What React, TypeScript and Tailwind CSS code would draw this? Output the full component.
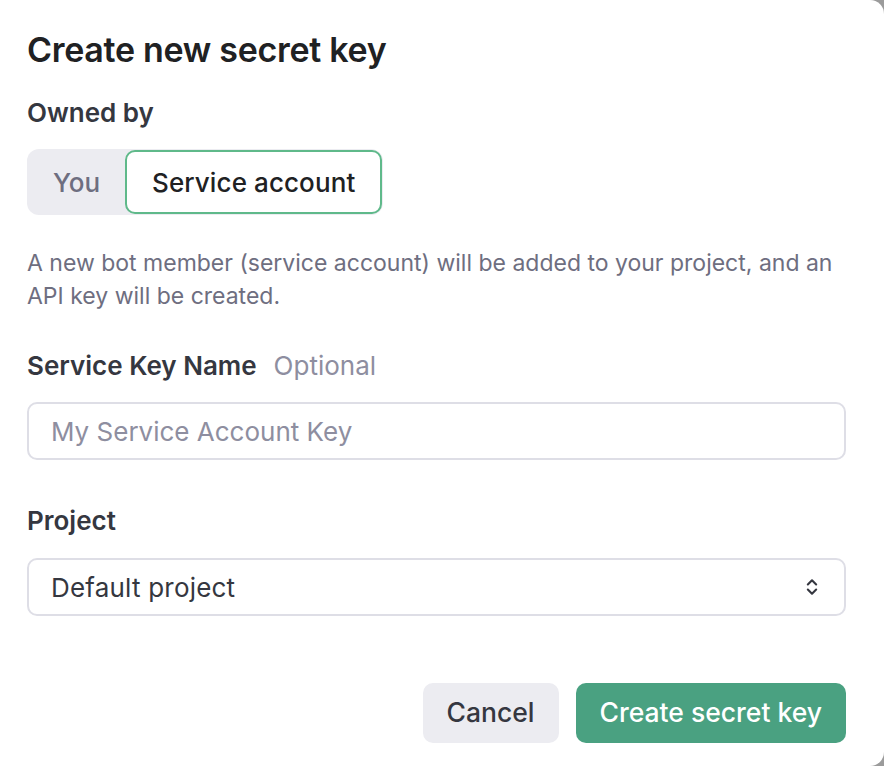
import { ChevronsUpDown } from "lucide-react";

export default function App() {
  return (
    <div className="w-[884px] h-[766px] bg-[#9b9b9b] font-['Inter',sans-serif]">
      <div className="w-full h-full bg-white rounded-r-[14px] pl-[27px] pr-[38px] pt-[30px]">
        <h1 className="text-[34px] leading-[40px] font-semibold text-[#202123] tracking-[-0.3px]">
          Create new secret key
        </h1>

        <h2 className="mt-[27px] text-[26px] leading-[32px] font-semibold text-[#353740]">Owned by</h2>

        <div className="mt-[20px] inline-flex h-[66px] rounded-[12px] bg-[#ececf1] p-px">
          <button className="w-[97px] text-[26px] font-medium text-[#6e6e80]">You</button>
          <button className="px-[25px] rounded-[10px] border-2 border-[#5fb98a] bg-white text-[26px] font-medium text-[#202123] tracking-[0.1px]">
            Service account
          </button>
        </div>

        <p className="mt-[32px] text-[23px] leading-[33px] text-[#6e6e80]">
          A new bot member (service account) will be added to your project, and an API key will be created.
        </p>

        <div className="mt-[37px] flex items-baseline gap-[17px]">
          <span className="text-[26px] leading-[32px] font-semibold text-[#353740]">Service Key Name</span>
          <span className="text-[26px] leading-[32px] text-[#8e8ea0]">Optional</span>
        </div>

        <input
          placeholder="My Service Account Key"
          className="mt-[20px] w-full h-[58px] rounded-[10px] border-2 border-[#dedee6] px-[22px] text-[26px] text-[#353740] placeholder:text-[#8e8ea0] outline-none"
        />

        <h2 className="mt-[45px] text-[26px] leading-[32px] font-semibold text-[#353740]">Project</h2>

        <div className="mt-[21px] w-full h-[58px] rounded-[10px] border-2 border-[#dedee6] px-[22px] flex items-center justify-between">
          <span className="text-[26px] text-[#353740] tracking-[0.2px]">Default project</span>
          <ChevronsUpDown size={20} strokeWidth={2.5} className="text-[#353740]" />
        </div>

        <div className="mt-[67px] flex justify-end gap-[17px]">
          <button className="h-[60px] px-[24px] rounded-[10px] bg-[#ececf1] text-[26.5px] font-medium text-[#353740]">
            Cancel
          </button>
          <button className="h-[60px] px-[24px] rounded-[10px] bg-[#4aa181] text-[26.5px] font-medium text-white">
            Create secret key
          </button>
        </div>
      </div>
    </div>
  );
}
